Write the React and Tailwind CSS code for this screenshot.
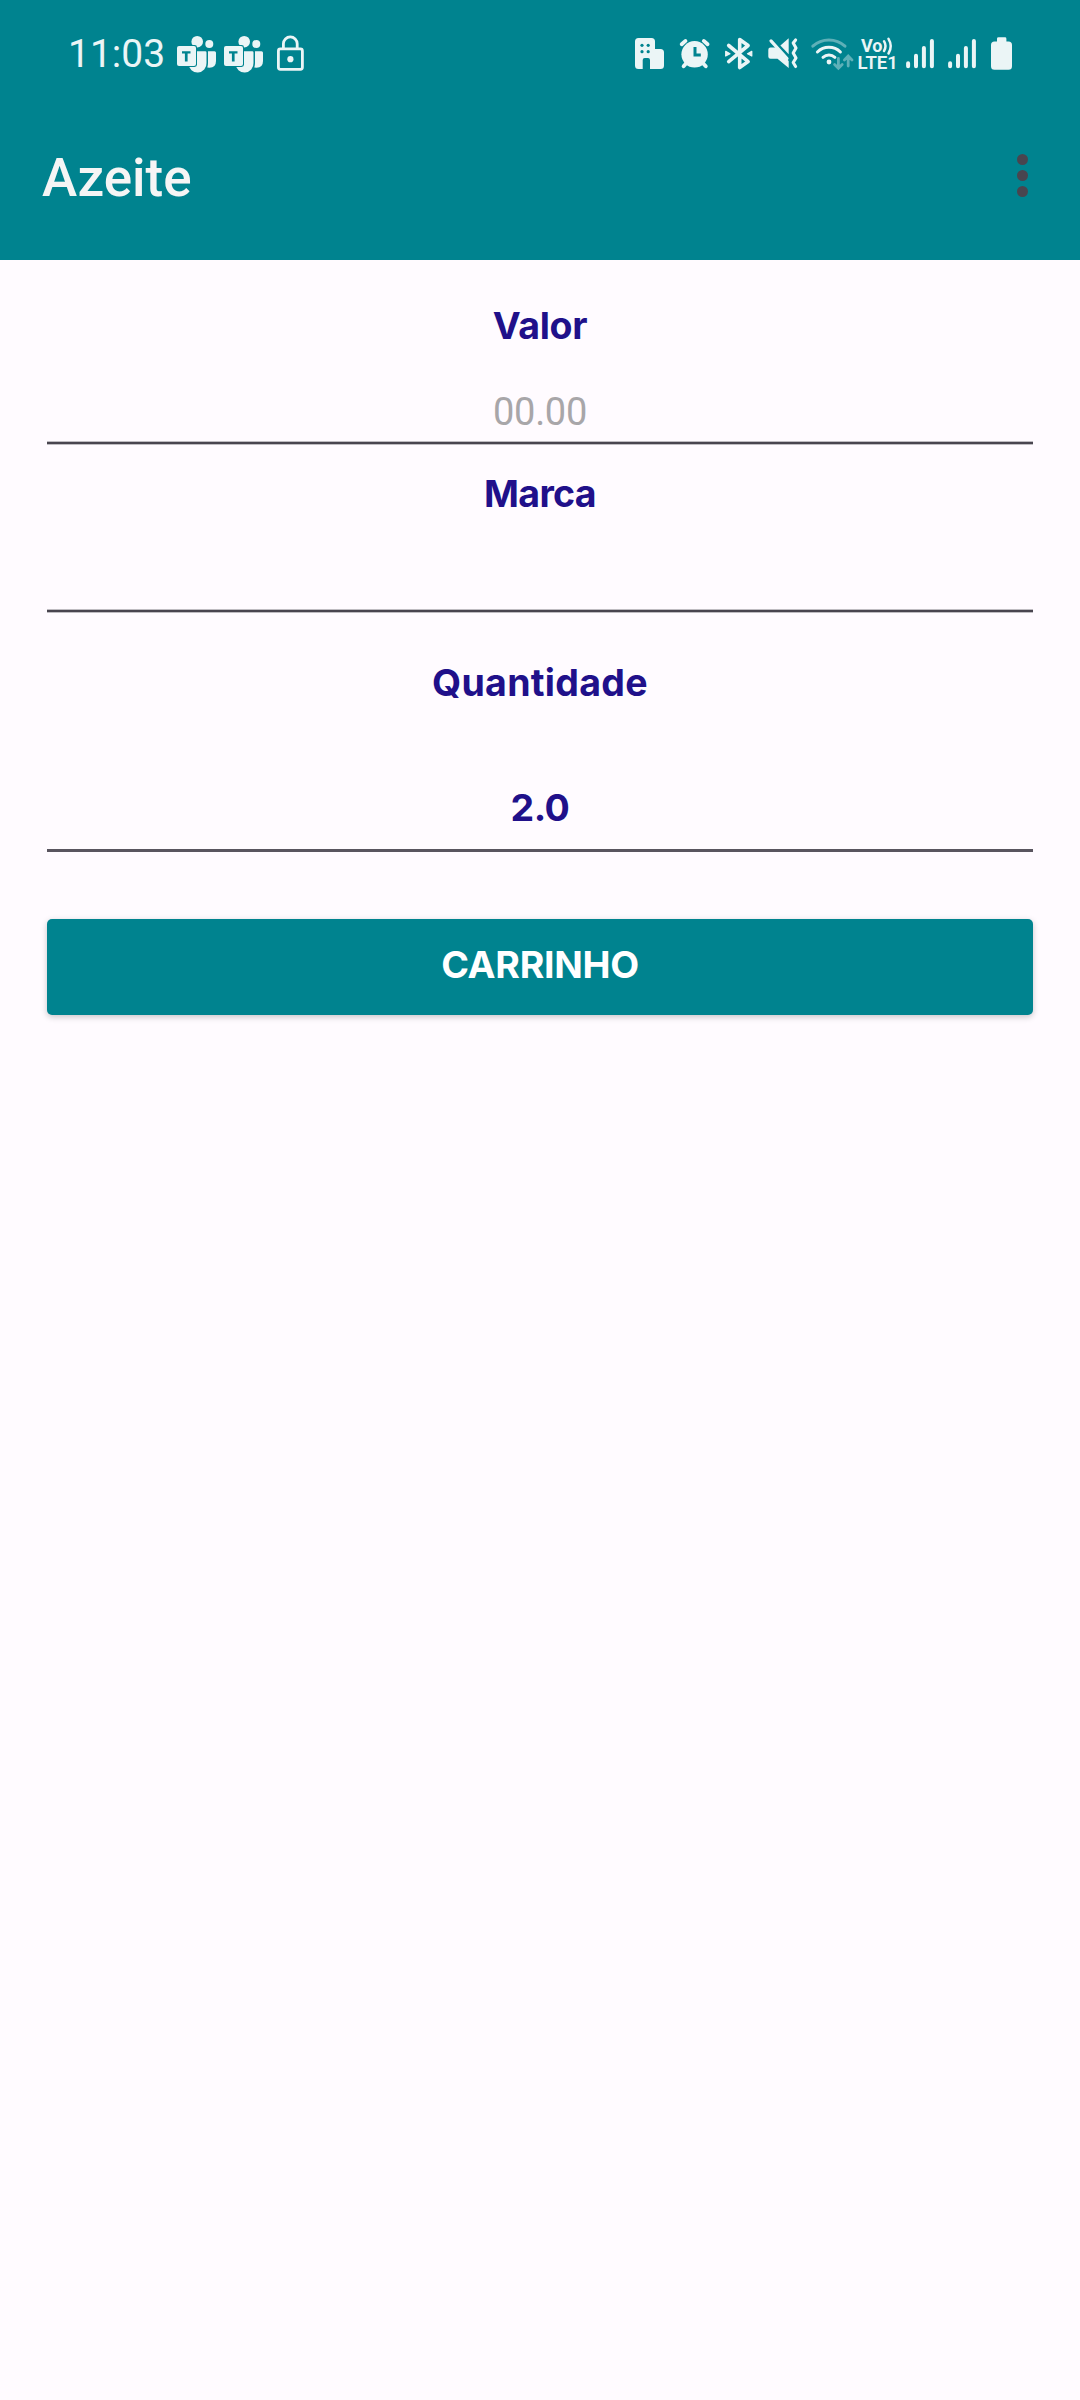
import React from "react";

const C = "#ebf5f6";
const TEAL = "#00838f";

function Teams() {
  return (
    <svg width="42" height="42" viewBox="176 34 42 42" fill={C}>
      <circle cx="197.2" cy="41.7" r="5.8" />
      <circle cx="209.3" cy="44" r="4" />
      <path d="M188.5 51.3H205.2Q206.5 51.3 206.5 52.6V63A9 9 0 0 1 188.5 64Z" />
      <path d="M208 51.3H214.5Q216 51.3 216 52.8V61Q216 67.7 209.5 67.7L207.3 67.4Q208 65.5 208 63Z" />
      <rect x="176.2" y="45" width="20.8" height="22" rx="2.4" fill={TEAL} />
      <rect x="177" y="46" width="19" height="20" rx="2" />
      <path d="M182 51.2H190.5V53.6H187.6V61.6H184.9V53.6H182Z" fill={TEAL} />
    </svg>
  );
}

function Lock() {
  return (
    <svg width="32" height="42" viewBox="274 34 32 42" fill="none" stroke={C} strokeWidth="2.8">
      <rect x="278.4" y="48.9" width="24" height="20.4" rx="2" />
      <path d="M283.4 48V43.8A6.9 6.9 0 0 1 297.2 43.8V48" />
      <circle cx="290.4" cy="59.2" r="3.1" fill={C} stroke="none" />
    </svg>
  );
}

function StatusIcons() {
  return (
    <svg width="390" height="42" viewBox="630 34 390 42" fill={C}>
      <path d="M638.5 38H651.5Q655 38 655 41.5V49H660.5Q664 49 664 52.5V65.5Q664 69 660.5 69H650V60Q650 58 648 58H644.7Q642.7 58 642.7 60V69H638.5Q635 69 635 65.5V41.5Q635 38 638.5 38Z" />
      <g fill={TEAL}>
        <circle cx="642" cy="45.3" r="1.6" />
        <circle cx="648.2" cy="45.3" r="1.6" />
        <circle cx="642" cy="51.7" r="1.6" />
        <circle cx="648.2" cy="51.7" r="1.6" />
      </g>
      <circle cx="694.6" cy="54.3" r="13.2" />
      <g fill="none" stroke={C} strokeWidth="3.8" strokeLinecap="round">
        <path d="M681.7 44.2L685.5 40.9M707.6 44.2L703.8 40.9M683.6 66.3L686 63.5M705.8 66.3L703.2 63.5" />
      </g>
      <path d="M695 47V55H700.8" fill="none" stroke={TEAL} strokeWidth="3" />
      <path d="M728.7 45.5L748.1 61.6L739.7 67.5V39.5L748.1 45.5L728.7 61.6" fill="none" stroke={C} strokeWidth="3.6" strokeLinejoin="round" strokeLinecap="round" />
      <path d="M725.7 51.3L730 53.7L725.7 56Z M751.8 51.3L747.5 53.7L751.8 56Z" stroke={C} strokeWidth="1.2" strokeLinejoin="round" />
      <path d="M770.5 47.5H776L788.7 61V68L777.5 58.7H770.5Q768.3 58.7 768.3 56.5V49.7Q768.3 47.5 770.5 47.5Z" />
      <path d="M771 40.9L787 58.5" stroke={C} strokeWidth="3.2" strokeLinecap="round" />
      <path d="M780.4 45.6L788.7 38.3V54.3Z" />
      <path d="M795.6 40L793.2 43L796 48L793.2 53L796 58L793.2 62.5L795.6 66.5" fill="none" stroke={C} strokeWidth="3.1" strokeLinecap="round" strokeLinejoin="round" />
      <g fill="none" stroke={C} strokeWidth="3" strokeLinecap="round">
        <path d="M812.8 46.2A24 24 0 0 1 845 46.2" opacity="0.4" />
        <path d="M817.4 52A16.5 16.5 0 0 1 840.4 52" />
        <path d="M823 57.3A9 9 0 0 1 834.9 57.3" />
        <path d="M838.4 58.5V68M834.6 64.4L838.4 68.2L842.2 64.4M848.2 66V56.3M844.4 59.9L848.2 56.1L852 59.9" strokeWidth="2.8" opacity="0.4" />
      </g>
      <circle cx="829" cy="62" r="2.4" />
      <text x="861" y="51.5" fontSize="18.2" fontWeight="700" fontFamily="Roboto, sans-serif" textLength="21.5" lengthAdjust="spacingAndGlyphs">Vo</text>
      <path d="M884 41.2Q887 46.2 884 51M888.5 38.8Q893 46 888.5 53.5" fill="none" stroke={C} strokeWidth="2.5" strokeLinecap="round" />
      <text x="857.5" y="69" fontSize="18.3" fontWeight="600" fontFamily="Roboto, sans-serif" textLength="40.5" lengthAdjust="spacingAndGlyphs">LTE1</text>
      <g stroke={C} strokeWidth="4" strokeLinecap="round">
        <path d="M908.1 63.2V66.3M916 55.7V66.3M923.9 48V66.3M931.9 41V66.3" />
        <path d="M950.1 63.2V66.3M958 55.7V66.3M965.9 48V66.3M973.9 41V66.3" />
      </g>
      <path d="M998.5 37.3H1005Q1006.4 37.3 1006.4 38.7V41.5H1008.5Q1012 41.5 1012 45V66.2Q1012 69.7 1008.5 69.7H994.5Q991 69.7 991 66.2V45Q991 41.5 994.5 41.5H997V38.7Q997 37.3 998.5 37.3Z" />
    </svg>
  );
}

export default function App() {
  return (
    <div className="flex h-[2400px] w-[1080px] flex-col bg-[#fffbff] font-[Roboto,sans-serif]">
      <header className="flex h-[260px] flex-col bg-[#00838f]">
        <div className="flex h-[110px] items-center pl-[68px] pr-[60px] text-[#ebf5f6]">
          <span className="mb-[2px] w-[108px] text-[39px] leading-[42px]">11:03</span>
          <div className="flex gap-[5px]"><Teams /><Teams /></div>
          <div className="ml-[9px]"><Lock /></div>
          <div className="ml-auto"><StatusIcons /></div>
        </div>
        <div className="flex h-[130px] items-center justify-between pl-[42px] pr-[52px]">
          <h1 className="mt-[6px] text-[53px] font-medium leading-[60px] text-[#f5f5f5]">Azeite</h1>
          <button className="flex flex-col gap-[5px]" aria-label="Menu">
            <i className="size-[11px] rounded-full bg-[#49454f]" />
            <i className="size-[11px] rounded-full bg-[#49454f]" />
            <i className="size-[11px] rounded-full bg-[#49454f]" />
          </button>
        </div>
      </header>
      <main className="flex flex-col px-[47px] text-center font-[Inter,sans-serif] text-[37.5px] font-bold leading-[44px] text-[#20108a]">
        <label className="mt-[44px] tracking-[-0.3px]">Valor</label>
        <div className="mt-[42px] font-[Roboto,sans-serif] text-[38px] font-normal tracking-[-0.3px] text-[#a8a6a9]">00.00</div>
        <div className="mt-[7px] h-[4px] border-y border-[#bfbcc1] bg-[#49454f]" />
        <label className="mt-[27px] tracking-[-0.7px]">Marca</label>
        <div className="mt-[93px] h-[4px] border-y border-[#bfbcc1] bg-[#49454f]" />
        <label className="mt-[48px] tracking-[0.3px]">Quantidade</label>
        <div className="mt-[81px] tracking-[-0.5px]">2.0</div>
        <div className="mt-[19px] h-[3px] bg-[#59555f]" />
        <button className="mt-[67px] h-[96px] rounded-[5px] bg-[#00838f] pb-[4px] tracking-[-0.3px] text-white shadow-[0_2px_6px_rgba(0,0,0,0.22)]">CARRINHO</button>
      </main>
    </div>
  );
}
